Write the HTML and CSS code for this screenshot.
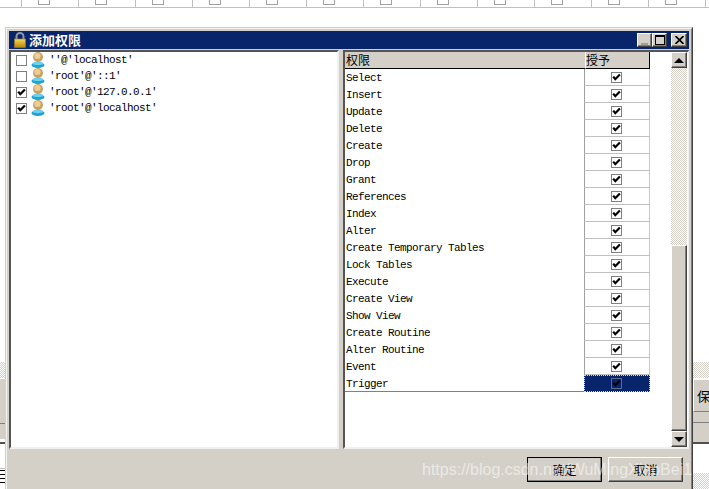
FILE: index.html
```html
<!DOCTYPE html>
<html lang="zh">
<head>
<meta charset="utf-8">
<title>添加权限</title>
<link rel="stylesheet" href="styles.css">
</head>
<body>
<svg class="defs" width="0" height="0" aria-hidden="true">
  <symbol id="tick" viewBox="0 0 9 9"><path d="M1.200 3.600L3.300 6.200L7.900 1.400" fill="none" stroke="#000" stroke-width="2.200"/></symbol>
  <symbol id="user" viewBox="0 0 14 16">
    <ellipse cx="7" cy="13" rx="6.500" ry="3" fill="#19a3d6"/>
    <path d="M1.500 12c1-2 3-3 5.500-3s4.500 1 5.500 3c-2 1.500-9 1.500-11 0z" fill="#6fd0ee"/>
    <ellipse cx="7" cy="5" rx="5" ry="5" fill="#c9a263"/>
    <ellipse cx="6.500" cy="4" rx="3.200" ry="3" fill="#eccf96"/>
  </symbol>
</svg>
<div class="desk">
  <div class="top-strip">
    <div class="cell"><i></i></div><div class="cell"><i></i></div><div class="cell"><i></i></div><div class="cell"><i></i></div>
    <div class="cell"><i></i></div><div class="cell"><i></i></div><div class="cell"><i></i></div><div class="cell"><i></i></div>
    <div class="cell"><i></i></div><div class="cell"><i></i></div><div class="cell"><i></i></div><div class="cell"><i></i></div>
    <div class="cell"><i></i></div><div class="cell"><i></i></div>
  </div>

  <div class="sliver sliver-left">
    <div class="dither"></div>
    <div class="sl-panel">
      <div class="sl-line sl-l1"></div>
    </div>
    <div class="sl-white"></div>
    <div class="sl-dark"></div>
    <div class="sl-blank"></div>
    <div class="sl-text"></div>
  </div>

  <div class="sliver sliver-right">
    <div class="dither"></div>
    <div class="sr-panel">
      <div class="sr-button">保存</div>
      <div class="sr-row"></div>
      <div class="sr-fill"></div>
    </div>
    <div class="sl-dark"></div>
    <div class="sr-blank"></div>
    <div class="dither dither-end"></div>
  </div>

  <section class="window">
    <div class="window-inner">
      <header class="titlebar">
        <svg class="lock" viewBox="0 0 12 16" aria-hidden="true">
          <defs><linearGradient id="gold" x1="0" y1="0" x2="0" y2="1"><stop offset="0" stop-color="#f7d858"/><stop offset="1" stop-color="#b88408"/></linearGradient></defs>
          <path d="M2.500 8V4.500a3.500 3.500 0 0 1 7 0V8" fill="none" stroke="#8d99a8" stroke-width="2"/>
          <rect x="0.500" y="7" width="11" height="8.500" fill="url(#gold)" stroke="#a87c10" stroke-width="0.600"/>
        </svg>
        <span class="title-text">添加权限</span>
        <div class="win-buttons">
          <button class="win-btn" aria-label="最小化"><span class="glyph-min"></span></button>
          <button class="win-btn" aria-label="最大化"><span class="glyph-max"></span></button>
          <button class="win-btn win-close" aria-label="关闭">
            <svg viewBox="0 0 9 8" width="9" height="8"><path d="M0.500 0L8.500 8M8.500 0L0.500 8" stroke="#000" stroke-width="1.700"/></svg>
          </button>
        </div>
      </header>

      <div class="split">
        <div class="sunken user-list">
          <div class="user-row"><span class="chk"></span><svg class="user-icon"><use href="#user"/></svg><span class="mono">''@'localhost'</span></div>
          <div class="user-row"><span class="chk"></span><svg class="user-icon"><use href="#user"/></svg><span class="mono">'root'@'::1'</span></div>
          <div class="user-row"><span class="chk"><svg><use href="#tick"/></svg></span><svg class="user-icon"><use href="#user"/></svg><span class="mono">'root'@'127.0.0.1'</span></div>
          <div class="user-row"><span class="chk"><svg><use href="#tick"/></svg></span><svg class="user-icon"><use href="#user"/></svg><span class="mono">'root'@'localhost'</span></div>
        </div>

        <div class="sunken perm-panel">
          <div class="perm-table">
            <div class="perm-head"><div class="hcell hname">权限</div><div class="hcell hgrant">授予</div></div>
            <div class="perm-row"><div class="pname mono">Select</div><div class="pgrant"><span class="chk"><svg><use href="#tick"/></svg></span></div></div>
            <div class="perm-row"><div class="pname mono">Insert</div><div class="pgrant"><span class="chk"><svg><use href="#tick"/></svg></span></div></div>
            <div class="perm-row"><div class="pname mono">Update</div><div class="pgrant"><span class="chk"><svg><use href="#tick"/></svg></span></div></div>
            <div class="perm-row"><div class="pname mono">Delete</div><div class="pgrant"><span class="chk"><svg><use href="#tick"/></svg></span></div></div>
            <div class="perm-row"><div class="pname mono">Create</div><div class="pgrant"><span class="chk"><svg><use href="#tick"/></svg></span></div></div>
            <div class="perm-row"><div class="pname mono">Drop</div><div class="pgrant"><span class="chk"><svg><use href="#tick"/></svg></span></div></div>
            <div class="perm-row"><div class="pname mono">Grant</div><div class="pgrant"><span class="chk"><svg><use href="#tick"/></svg></span></div></div>
            <div class="perm-row"><div class="pname mono">References</div><div class="pgrant"><span class="chk"><svg><use href="#tick"/></svg></span></div></div>
            <div class="perm-row"><div class="pname mono">Index</div><div class="pgrant"><span class="chk"><svg><use href="#tick"/></svg></span></div></div>
            <div class="perm-row"><div class="pname mono">Alter</div><div class="pgrant"><span class="chk"><svg><use href="#tick"/></svg></span></div></div>
            <div class="perm-row"><div class="pname mono">Create Temporary Tables</div><div class="pgrant"><span class="chk"><svg><use href="#tick"/></svg></span></div></div>
            <div class="perm-row"><div class="pname mono">Lock Tables</div><div class="pgrant"><span class="chk"><svg><use href="#tick"/></svg></span></div></div>
            <div class="perm-row"><div class="pname mono">Execute</div><div class="pgrant"><span class="chk"><svg><use href="#tick"/></svg></span></div></div>
            <div class="perm-row"><div class="pname mono">Create View</div><div class="pgrant"><span class="chk"><svg><use href="#tick"/></svg></span></div></div>
            <div class="perm-row"><div class="pname mono">Show View</div><div class="pgrant"><span class="chk"><svg><use href="#tick"/></svg></span></div></div>
            <div class="perm-row"><div class="pname mono">Create Routine</div><div class="pgrant"><span class="chk"><svg><use href="#tick"/></svg></span></div></div>
            <div class="perm-row"><div class="pname mono">Alter Routine</div><div class="pgrant"><span class="chk"><svg><use href="#tick"/></svg></span></div></div>
            <div class="perm-row"><div class="pname mono">Event</div><div class="pgrant"><span class="chk"><svg><use href="#tick"/></svg></span></div></div>
            <div class="perm-row last"><div class="pname mono">Trigger</div><div class="pgrant selected"><span class="chk"><svg><use href="#tick"/></svg></span></div></div>
          </div>
          <div class="scrollbar">
            <button class="sb-btn" aria-label="上"><span class="arrow-up"></span></button>
            <div class="sb-track"></div>
            <div class="sb-thumb"></div>
            <button class="sb-btn" aria-label="下"><span class="arrow-down"></span></button>
          </div>
        </div>
      </div>

      <footer class="actions">
        <button class="btn btn-default">确定</button>
        <button class="btn">取消</button>
      </footer>
    </div>
  </section>

  <div class="watermark">https://blog.csdn.net/WuMingXiaoBei1</div>
</div>
</body>
</html>
```

FILE: styles.css
```css
* { box-sizing: border-box; }
html, body { margin: 0; padding: 0; background: #fff; }
.defs { position: absolute; }
.desk {
  position: relative;
  width: 709px;
  height: 489px;
  overflow: hidden;
  background: #fff;
  font-family: "Liberation Mono", monospace;
}

/* background application, behind the dialog */
.top-strip {
  display: flex;
  height: 8px;
  margin-left: -35px;
  border-bottom: 1px solid #c0c0c0;
}
.cell {
  flex: 0 0 57px;
  border-right: 1px solid #c0c0c0;
  padding-left: 16px;
}
.cell i {
  display: block;
  width: 12px;
  height: 5px;
  border: 1px solid #a0a0a0;
  border-top: 0;
}
.sliver {
  position: absolute;
  top: 362px;
  bottom: 0;
  display: flex;
  flex-direction: column;
}
.sliver-left { left: 0; width: 5px; }
.sliver-right { left: 693px; width: 16px; }
.dither {
  height: 16px;
  flex: none;
  background: repeating-conic-gradient(#d4d0c8 0 25%, #fff 0 50%) 0 0 / 2px 2px;
}
.dither-end { height: 16px; }
.sl-panel {
  height: 60px;
  margin-top: 1px;
  padding-top: 44px;
  background: #d4d0c8;
}
.sl-line { height: 1px; background: #808080; }
.sl-white { height: 3px; background: #fff; }
.sl-dark { height: 2px; flex: none; background: #505050; }
.sl-blank { height: 24px; }
.sl-text {
  height: 17px;
  border-top: 1px solid #c0c0c0;
  background: repeating-linear-gradient(#000 0 1px, #fff 1px 4px) 0 5px;
}
.sr-panel {
  height: 63px;
  margin-top: 1px;
  display: flex;
  flex-direction: column;
  background: #d4d0c8;
}
.sr-button {
  height: 33px;
  padding: 8px 0 0 3px;
  white-space: nowrap;
  overflow: hidden;
  border-top: 1px solid #fff;
  border-left: 1px solid #fff;
  border-bottom: 1px solid #808080;
  font: 13px/16px "Noto Sans CJK SC", sans-serif;
  color: #000;
}
.sr-row { height: 11px; border-bottom: 1px solid #808080; }
.sr-fill { flex: 1; }
.sr-blank { height: 29px; flex: none; }

/* dialog */
.window {
  position: absolute;
  left: 5px;
  top: 27px;
  width: 688px;
  height: 480px;
  border: 1px solid;
  border-color: #cfcfcf #404040 #404040 #cfcfcf;
  background: #d4d0c8;
}
.window-inner {
  height: 100%;
  padding: 2px;
  border: 1px solid;
  border-color: #f4f4f4 #808080 #808080 #f4f4f4;
}
.titlebar {
  display: flex;
  align-items: center;
  height: 18px;
  padding: 0 2px 0 5px;
  background: #08246b;
  color: #fff;
}
.lock { width: 12px; height: 16px; flex: none; }
.title-text {
  margin-left: 3px;
  font: bold 13px/18px "Noto Sans CJK SC", sans-serif;
}
.win-buttons { display: flex; margin-left: auto; }
.win-btn, .sb-btn, .btn {
  display: flex;
  align-items: center;
  justify-content: center;
  padding: 0;
  background: #d4d0c8;
  border: 1px solid;
  border-color: #fff #404040 #404040 #fff;
  box-shadow: inset -1px -1px 0 #808080;
}
.win-btn { position: relative; width: 15px; height: 14px; }
.win-close { margin-left: 4px; width: 16px; }
.glyph-min { display: block; width: 7px; height: 2px; margin-top: 8px; background: #a0a0a0; }
.glyph-max { display: block; width: 10px; height: 10px; border: 1px solid #000; border-top-width: 2px; }

.split {
  display: flex;
  height: 399px;
  margin-top: 1px;
  gap: 4px;
}
.sunken {
  border: 2px solid;
  border-color: #555 #f0f0f0 #f0f0f0 #555;
  background: #fff;
}
.user-list { width: 330px; flex: none; }
.user-row {
  display: flex;
  align-items: center;
  height: 16px;
  padding-left: 5px;
}
.mono {
  font-family: "Liberation Mono", monospace;
  font-size: 11px;
  letter-spacing: -0.6px;
  line-height: 16px;
  color: #000;
  white-space: pre;
}
.chk {
  display: block;
  flex: none;
  width: 11px;
  height: 11px;
  border: 1px solid #808080;
}
.chk svg { display: block; width: 9px; height: 9px; }
.user-icon { width: 14px; height: 16px; margin-left: 4px; flex: none; }
.user-row .mono { margin-left: 4px; }

.perm-panel {
  flex: 1;
  display: flex;
  border-right-width: 1px;
  border-bottom-width: 2px;
}
.perm-table { width: 326px; flex: none; }
.perm-head, .perm-row { display: flex; height: 17px; }
.hcell {
  height: 17px;
  padding-left: 1px;
  background: #d4d0c8;
  border-bottom: 1px solid #000;
  font: 12px/16px "Noto Sans CJK SC", sans-serif;
  color: #000;
}
.hname { width: 240px; }
.hgrant { width: 65px; padding-left: 0; border-right: 1px solid #000; border-left: 1px solid #fff; }
.pname { width: 239px; padding: 1px 0 0 1px; }
.pgrant {
  width: 66px;
  display: flex;
  align-items: center;
  justify-content: center;
  padding-right: 1px;
  border-left: 1px solid #a0a0a0;
  border-right: 1px solid #c8c8c8;
  border-bottom: 1px solid #c0c0c0;
}
.perm-row.last .pname { border-bottom: 1px solid #808080; }
.pgrant.selected {
  background: #08246b;
  border: 1px dotted #f0e060;
}
.pgrant.selected .chk { border-color: #5a6a90; }

.scrollbar {
  width: 16px;
  flex: none;
  display: flex;
  flex-direction: column;
}
.sb-btn { width: 16px; height: 16px; flex: none; }
.sb-track {
  flex: none;
  height: 177px;
  background: repeating-conic-gradient(#d4d0c8 0 25%, #fff 0 50%) 0 0 / 2px 2px;
}
.sb-thumb {
  flex: 1;
  background: #d4d0c8;
  border: 1px solid;
  border-color: #fff #404040 #404040 #fff;
  box-shadow: inset -1px -1px 0 #808080;
}
.arrow-up, .arrow-down {
  display: block;
  width: 0;
  height: 0;
  border-left: 5px solid transparent;
  border-right: 5px solid transparent;
}
.arrow-up { border-bottom: 5px solid #000; }
.arrow-down { border-top: 5px solid #000; }

.actions {
  display: flex;
  justify-content: flex-end;
  gap: 6px;
  padding: 8px 6px 0 0;
}
.btn {
  width: 75px;
  height: 25px;
  font: 12px/16px "Noto Sans CJK SC", sans-serif;
  color: #000;
}
.btn-default { outline: 1px solid #000; outline-offset: -1px; }

.watermark {
  position: absolute;
  left: 422px;
  top: 461px;
  font: 16px/18px "Liberation Sans", sans-serif;
  color: rgba(255, 255, 255, 0.55);
  white-space: nowrap;
}
```
